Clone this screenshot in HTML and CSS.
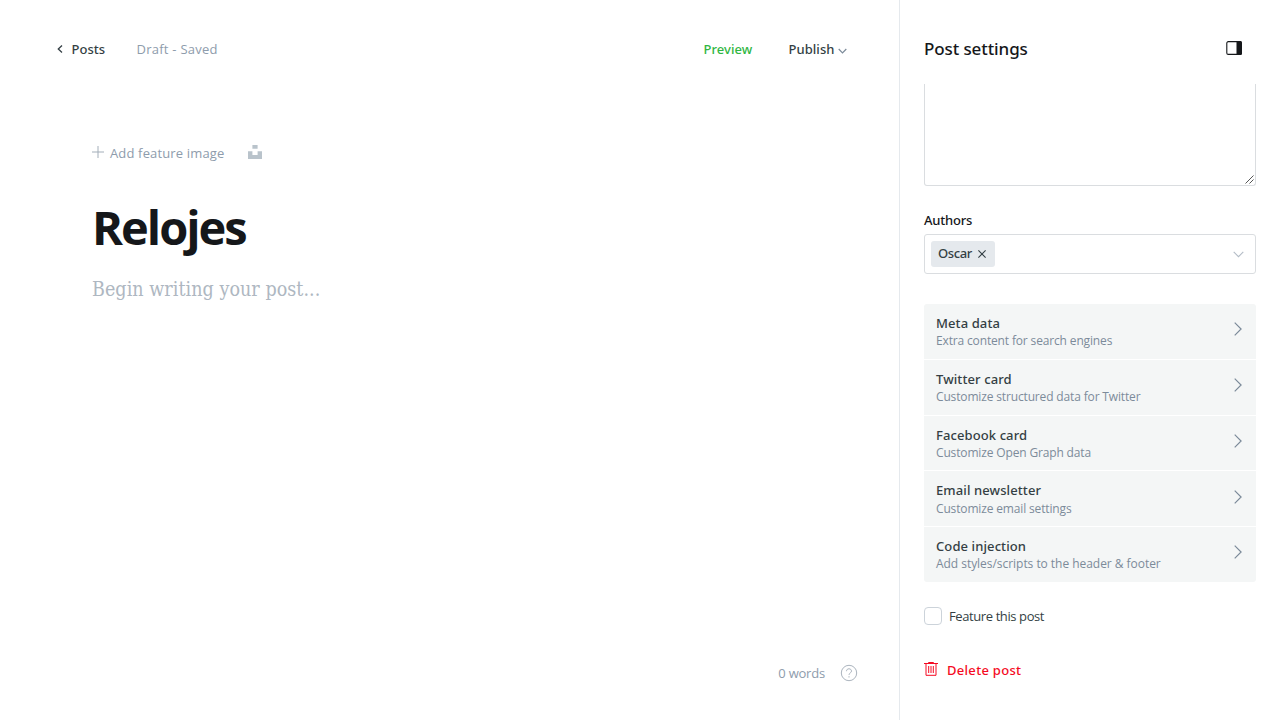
FILE: index.html
```html
<!DOCTYPE html>
<html lang="en">
<head>
<meta charset="utf-8">
<title>Relojes</title>
<link rel="stylesheet" href="styles.css">
</head>
<body>
<div class="app">
  <main class="editor">
    <header class="topbar">
      <a class="back"><svg width="6" height="8" viewBox="0 0 6 8"><path d="M5 .6 1.3 4 5 7.4"/></svg><span>Posts</span></a>
      <span class="status">Draft - Saved</span>
      <a class="preview">Preview</a>
      <a class="publish"><span>Publish</span><svg width="9" height="6" viewBox="0 0 9 6"><path d="M.7 1 4.5 4.8 8.3 1"/></svg></a>
    </header>
    <section class="canvas">
      <div class="feature">
        <svg class="plus" width="12" height="12" viewBox="0 0 12 12"><path d="M6 0v12M0 6h12"/></svg>
        <span>Add feature image</span>
        <svg class="unsplash" width="14" height="14" viewBox="0 0 14 14"><path d="M4.4 0h5.2v3.800H4.4zM0 6.200h4.400V10h5.200V6.200H14V14H0z"/></svg>
      </div>
      <h1>Relojes</h1>
      <p class="placeholder">Begin writing your post...</p>
    </section>
    <footer class="wordbar">
      <span>0 words</span>
      <svg width="18" height="18" viewBox="0 0 18 18"><circle cx="9" cy="9" r="7.7"/><path d="M6.500 7.200C6.500 5.600 7.600 4.800 9 4.800s2.500.9 2.500 2.300C11.500 8.900 9 8.900 9 10.900M9 12.200v1.300"/></svg>
    </footer>
  </main>
  <aside class="settings">
    <header class="settings-head">
      <h2>Post settings</h2>
      <svg width="16" height="14" viewBox="0 0 16 14"><rect class="frame" x=".8" y=".6" width="14.400" height="12.800" rx="1.500"/><path class="pane" d="M10.500 0H14.500Q16 0 16 1.500V12.500Q16 14 14.500 14H10.500z"/></svg>
    </header>
    <div class="excerpt"><svg width="9" height="9" viewBox="0 0 9 9"><path d="M.5 8.500 8.500.5M4.500 8.500l4-4"/></svg></div>
    <label class="field-label">Authors</label>
    <div class="select">
      <span class="token">Oscar<svg width="8" height="8" viewBox="0 0 8 8"><path d="M.4.4l7.200 7.200M7.600.4.4 7.600"/></svg></span>
      <svg class="caret" width="11" height="7" viewBox="0 0 11 7"><path d="M.7.9 5.500 5.700 10.300.9"/></svg>
    </div>
    <nav class="menu">
      <a class="item"><span class="text"><b>Meta data</b><small>Extra content for search engines</small></span><svg class="chev" width="8" height="14" viewBox="0 0 8 14"><path d="M.7.6 7.100 7 .7 13.400"/></svg></a>
      <a class="item"><span class="text"><b>Twitter card</b><small>Customize structured data for Twitter</small></span><svg class="chev" width="8" height="14" viewBox="0 0 8 14"><path d="M.7.6 7.100 7 .7 13.400"/></svg></a>
      <a class="item"><span class="text"><b>Facebook card</b><small>Customize Open Graph data</small></span><svg class="chev" width="8" height="14" viewBox="0 0 8 14"><path d="M.7.6 7.100 7 .7 13.400"/></svg></a>
      <a class="item"><span class="text"><b>Email newsletter</b><small>Customize email settings</small></span><svg class="chev" width="8" height="14" viewBox="0 0 8 14"><path d="M.7.6 7.100 7 .7 13.400"/></svg></a>
      <a class="item"><span class="text"><b>Code injection</b><small class="wide">Add styles/scripts to the header &amp; footer</small></span><svg class="chev" width="8" height="14" viewBox="0 0 8 14"><path d="M.7.6 7.100 7 .7 13.400"/></svg></a>
    </nav>
    <label class="check"><span class="box"></span><span class="check-text">Feature this post</span></label>
    <a class="delete"><svg width="14" height="15" viewBox="0 0 14 15"><path d="M0 2.500h14M4.500 2.500V1.500h5v1M2 2.500V14.300h10V2.500M4.700 5v7M7 5v7M9.300 5v7"/></svg><span>Delete post</span></a>
  </aside>
</div>
</body>
</html>
```
FILE: styles.css
```css
* { box-sizing: border-box; }
body {
  margin: 0;
  background: #fff;
  color: #343f44;
  font: 400 13px/20px "Open Sans", "Noto Sans", sans-serif;
}
h1, h2, p { margin: 0; }
svg { display: block; flex: none; fill: none; stroke: currentColor; }
.app { display: flex; width: 1280px; height: 720px; overflow: hidden; white-space: nowrap; }

.editor { width: 899px; display: flex; flex-direction: column; }
.topbar { display: flex; align-items: center; height: 98px; padding: 0 52px 0 57px; }
.back, .preview, .publish { font-family: "Noto Sans", sans-serif; font-weight: 500; letter-spacing: .05px; }
.back { display: flex; align-items: center; gap: 8.5px; width: 79.5px; }
.back svg { margin-top: -1px; stroke-width: 1.3; }
.status { flex: 1; color: #8e9cac; letter-spacing: .25px; }
.preview { width: 85px; color: #30b643; }
.publish { display: flex; align-items: center; gap: 3.5px; }
.publish svg { margin-top: 4px; color: #7c8b9a; stroke-width: 1.2; }

.canvas { flex: 1; padding: 45px 0 0 92px; }
.feature { display: flex; align-items: center; height: 20px; color: #8e9cac; letter-spacing: .15px; }
.plus { margin: -2px 6px 0 0; stroke-width: 1; color: #a3aeb9; }
.feature span { width: 138px; }
.unsplash { margin-top: -3px; fill: #b9c3cb; stroke: none; }
.canvas h1 { margin-top: 34px; font-size: 47px; line-height: 60px; font-weight: 700; letter-spacing: -2px; color: #15171a; }
.placeholder { margin-top: 17px; font: 400 19.5px/32px "DejaVu Serif Condensed", "DejaVu Serif", serif; letter-spacing: .05px; color: #aeb7c1; }
.wordbar { display: flex; align-items: center; justify-content: flex-end; gap: 15px; height: 36px; margin-bottom: 29px; padding-right: 41px; color: #8e9cac; letter-spacing: -.2px; }
.wordbar svg { color: #abb4be; stroke-width: 1; }

.settings { width: 381px; padding: 0 24px; border-left: 1px solid #e5e9ed; }
.settings-head { display: flex; align-items: flex-start; justify-content: space-between; height: 84px; padding: 37px 14px 0 0; }
.settings-head h2 { font: 500 17px/24px "Noto Sans", sans-serif; letter-spacing: -.1px; color: #15171a; }
.settings-head svg { margin-top: 4px; color: #15171a; }
.frame { stroke-width: 1.1; }
.pane { fill: #15171a; stroke: none; }
.excerpt { display: flex; align-items: flex-end; justify-content: flex-end; height: 102px; padding: 1px; border: 1px solid #dadde0; border-top: 0; border-radius: 0 0 3px 3px; color: #555; }
.excerpt svg { stroke-width: 1; }
.field-label { display: block; margin-top: 24px; height: 24px; font-family: "Noto Sans", sans-serif; font-weight: 500; letter-spacing: -.2px; color: #15171a; }
.select { display: flex; align-items: center; justify-content: space-between; height: 40px; padding: 0 11px 0 6px; border: 1px solid #dadde0; border-radius: 3px; }
.token { display: flex; align-items: center; gap: 6px; width: 64px; height: 26px; padding: 0 0 2px 7px; border-radius: 3px; background: #e5e9ed; font-family: "Noto Sans", sans-serif; font-weight: 500; letter-spacing: -.4px; }
.token svg { margin-top: 2px; stroke-width: 1.1; }
.caret { color: #b3bcc6; stroke-width: 1.1; }

.menu { display: flex; flex-direction: column; gap: 1px; margin-top: 30px; border-radius: 3px; overflow: hidden; }
.item { display: flex; justify-content: space-between; height: 54.8px; padding: 10px 14px 0 12px; background: #f4f6f6; }
.text { display: flex; flex-direction: column; }
.text b { font-family: "Noto Sans", sans-serif; line-height: 18px; font-weight: 500; letter-spacing: .1px; }
.text small { margin-top: .2px; font-size: 12px; line-height: 18px; letter-spacing: -.15px; color: #7c8b9a; }
.text .wide { letter-spacing: -.04px; }
.chev { margin-top: 8.2px; color: #7c8b9a; stroke-width: 1.2; }
.check { display: flex; align-items: center; gap: 7px; height: 18px; margin-top: 25px; }
.check-text { letter-spacing: -.4px; }
.box { width: 18px; height: 18px; border: 1px solid #ccd3da; border-radius: 4px; }
.delete { display: flex; align-items: center; gap: 9px; height: 20px; margin-top: 35px; font-family: "Noto Sans", sans-serif; font-weight: 500; letter-spacing: .3px; color: #f50b23; }
.delete svg { margin-top: -3px; }
```
